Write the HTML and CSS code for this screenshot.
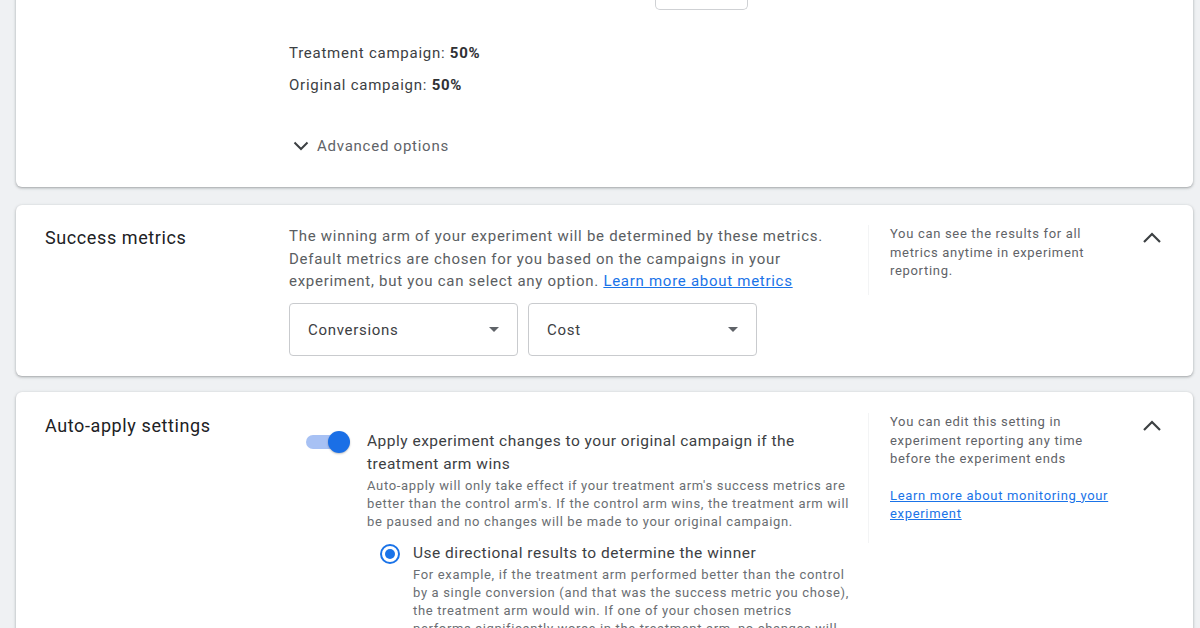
FILE: index.html
```html
<!DOCTYPE html>
<html lang="en">
<head>
<meta charset="utf-8">
<title>Experiment settings</title>
<link rel="stylesheet" href="styles.css">
</head>
<body>
<main class="page">
  <section class="card card-top">
    <div class="top-body">
      <div class="input-stub"></div>
      <p class="split">Treatment campaign: <b>50%</b></p>
      <p class="split split-second">Original campaign: <b>50%</b></p>
      <div class="advanced">
        <svg class="chev-down" width="16" height="10" viewBox="0 0 16 10"><polyline points="1.5,1.5 8,8 14.5,1.5" fill="none" stroke="#3c4043" stroke-width="2"/></svg>
        <span>Advanced options</span>
      </div>
    </div>
  </section>

  <section class="card row card-mid">
    <h2 class="label">Success metrics</h2>
    <div class="main">
      <p class="desc">The winning arm of your experiment will be determined by these metrics.<br>Default metrics are chosen for you based on the campaigns in your<br>experiment, but you can select any option. <a href="#" class="link">Learn more about metrics</a></p>
      <div class="selects">
        <div class="select"><span>Conversions</span><span class="caret"></span></div>
        <div class="select"><span>Cost</span><span class="caret"></span></div>
      </div>
    </div>
    <div class="aside">
      <p>You can see the results for all<br>metrics anytime in experiment<br>reporting.</p>
    </div>
    <div class="collapse">
      <svg width="20" height="12" viewBox="0 0 20 12"><polyline points="2,10 10,2 18,10" fill="none" stroke="#3c4043" stroke-width="2.2"/></svg>
    </div>
  </section>

  <section class="card row card-last">
    <h2 class="label">Auto-apply settings</h2>
    <div class="main">
      <div class="toggle-row">
        <div class="toggle"><span class="track"></span><span class="thumb"></span></div>
        <div class="toggle-text">
          <p class="opt-title">Apply experiment changes to your original campaign if the<br>treatment arm wins</p>
          <p class="small">Auto-apply will only take effect if your treatment arm's success metrics are<br>better than the control arm's. If the control arm wins, the treatment arm will<br>be paused and no changes will be made to your original campaign.</p>
          <div class="radio-row">
            <span class="radio"><span class="dot"></span></span>
            <div>
              <p class="opt-title">Use directional results to determine the winner</p>
              <p class="small">For example, if the treatment arm performed better than the control<br>by a single conversion (and that was the success metric you chose),<br>the treatment arm would win. If one of your chosen metrics<br>performs significantly worse in the treatment arm, no changes will</p>
            </div>
          </div>
        </div>
      </div>
    </div>
    <div class="aside">
      <p>You can edit this setting in<br>experiment reporting any time<br>before the experiment ends</p>
      <p class="aside-link"><a href="#" class="link">Learn more about monitoring your<br>experiment</a></p>
    </div>
    <div class="collapse">
      <svg width="20" height="12" viewBox="0 0 20 12"><polyline points="2,10 10,2 18,10" fill="none" stroke="#3c4043" stroke-width="2.2"/></svg>
    </div>
  </section>
</main>
</body>
</html>
```

FILE: styles.css
```css
* { box-sizing: border-box; }
html, body { margin: 0; padding: 0; }
body {
  background: #eff1f3;
  font-family: Roboto, "Liberation Sans", Arial, sans-serif;
  color: #3c4043;
  height: 628px;
  overflow: hidden;
  letter-spacing: 0.7px;
}
p { margin: 0; }
h2 { margin: 0; font-weight: 400; }

.page {
  display: flex;
  flex-direction: column;
  gap: 16px;
  padding: 0 7px 0 16px;
}

.card {
  background: #fff;
  border-radius: 6px;
  box-shadow: 0 1px 2px rgba(60,64,67,.30), 0 1px 3px 1px rgba(60,64,67,.12);
}

.card-top {
  margin-top: -40px;
  margin-bottom: 2px;
  height: 227px;
}
.top-body {
  padding-left: 273px;
  display: flex;
  flex-direction: column;
  align-items: flex-start;
}
.input-stub {
  margin-left: 366px;
  width: 93px;
  height: 50px;
  border: 1px solid #cfd1d4;
  border-top: none;
  border-radius: 0 0 5px 5px;
}
.split {
  margin-top: 33px;
  font-size: 15px;
  line-height: 20px;
  letter-spacing: 0.75px;
  color: #3c4043;
}
.split b { font-weight: 700; color: #303134; }
.split-second { margin-top: 12px; }
.advanced {
  margin-top: 41px;
  display: flex;
  align-items: center;
  gap: 8px;
  font-size: 15px;
  line-height: 20px;
  letter-spacing: 0.75px;
  color: #5f6368;
  padding-left: 4px;
}

.row {
  display: grid;
  grid-template-columns: 244px 579px 257px 1fr;
  padding: 21px 0 20px 29px;
}
.label {
  font-size: 18px;
  line-height: 24px;
  letter-spacing: 0.6px;
  color: #202124;
}
.card-last .label { margin-top: 1px; }
.desc {
  font-size: 15px;
  line-height: 22.5px;
  letter-spacing: 0.72px;
  color: #5a5e62;
  white-space: nowrap;
  margin-top: -1px;
}
.link {
  color: #1a73e8;
  text-decoration: underline;
}
.selects {
  display: flex;
  gap: 10px;
  margin-top: 10.5px;
}
.select {
  width: 229px;
  height: 53px;
  border: 1px solid #c9cbce;
  border-radius: 4px;
  display: flex;
  align-items: center;
  justify-content: space-between;
  padding: 0 18px 0 18px;
  font-size: 15px;
  color: #3c4043;
}
.caret {
  width: 0;
  height: 0;
  border-left: 5px solid transparent;
  border-right: 5px solid transparent;
  border-top: 5px solid #5f6368;
}

.aside {
  border-left: 1px solid #f3f4f5;
  padding-left: 21px;
  font-size: 13px;
  line-height: 18.5px;
  letter-spacing: 0.68px;
  color: #5f6368;
  height: 70px;
  margin-top: -1px;
}
.card-last .aside { height: 130px; margin-top: 0; }
.aside-link { margin-top: 18px; }

.collapse {
  padding-left: 17px;
  padding-top: 3px;
}
.card-last .collapse { padding-top: 4px; }

.card-last {
  height: 300px;
}

.toggle-row {
  display: flex;
  gap: 17px;
  padding-left: 17px;
  margin-top: 17px;
}
.toggle {
  position: relative;
  width: 44px;
  height: 22px;
  flex: none;
  margin-top: 1px;
}
.toggle .track {
  position: absolute;
  left: 0;
  top: 4px;
  width: 40px;
  height: 14px;
  border-radius: 7px;
  background: #a7c1f4;
}
.toggle .thumb {
  position: absolute;
  right: 0;
  top: 0;
  width: 22px;
  height: 22px;
  border-radius: 50%;
  background: #1a6fe6;
  box-shadow: 0 1px 2px rgba(0,0,0,.25);
}
.opt-title {
  font-size: 15.5px;
  line-height: 23px;
  letter-spacing: 0.5px;
  color: #3c4043;
}
.small {
  font-size: 13px;
  line-height: 18px;
  letter-spacing: 0.66px;
  color: #6a6e72;
  white-space: nowrap;
}
.toggle-text .small { margin-top: 1px; }
.radio-row {
  display: flex;
  gap: 13px;
  margin-top: 11px;
  padding-left: 13px;
}
.radio {
  flex: none;
  width: 20px;
  height: 20px;
  border: 2px solid #1a73e8;
  border-radius: 50%;
  display: flex;
  align-items: center;
  justify-content: center;
  margin-top: 2px;
}
.radio .dot {
  width: 10px;
  height: 10px;
  border-radius: 50%;
  background: #1a73e8;
}
.radio-row .small { margin-top: 1px; }
```
